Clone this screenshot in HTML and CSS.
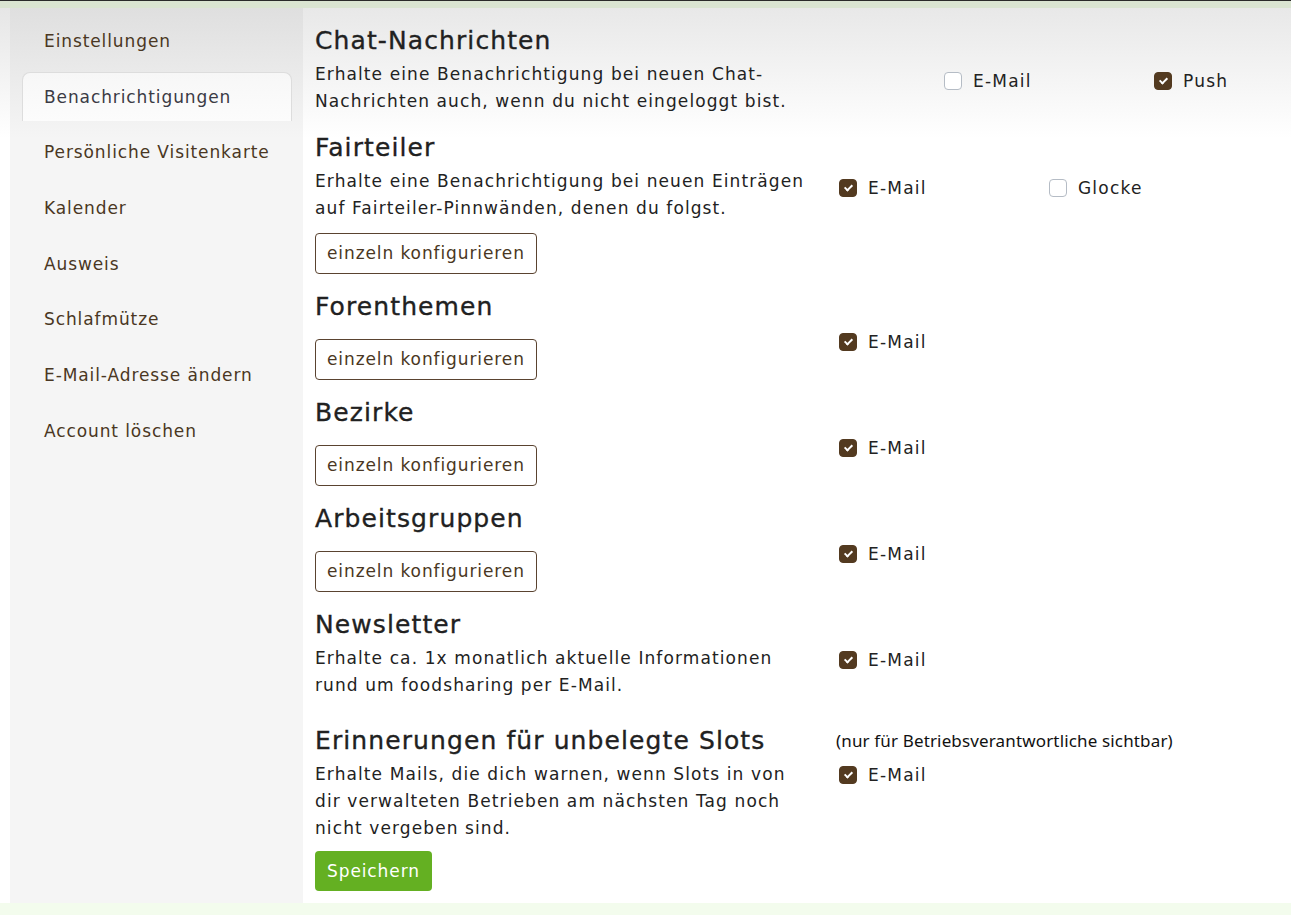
FILE: index.html
```html
<!DOCTYPE html>
<html>
<head>
    <title>Benachrichtigungen</title>
    <link rel="stylesheet" href="styles.css">
</head>
<body>
    <div class="topbar"></div>
    <div class="page">
        <div class="sidebar">
            <a class="nav-item">Einstellungen</a>
            <a class="nav-item active">Benachrichtigungen</a>
            <a class="nav-item">Persönliche Visitenkarte</a>
            <a class="nav-item">Kalender</a>
            <a class="nav-item">Ausweis</a>
            <a class="nav-item">Schlafmütze</a>
            <a class="nav-item">E-Mail-Adresse ändern</a>
            <a class="nav-item">Account löschen</a>
        </div>

        <div class="content">
            <div class="section">
                <div class="info">
                    <h2>Chat-Nachrichten</h2>
                    <p>Erhalte eine Benachrichtigung bei neuen Chat-Nachrichten auch, wenn du nicht eingeloggt bist.</p>
                </div>
                <div class="options options-low shifted">
                    <label class="option"><span class="box"></span>E-Mail</label>
                    <label class="option"><span class="box checked"></span>Push</label>
                </div>
            </div>

            <div class="section">
                <div class="info">
                    <h2>Fairteiler</h2>
                    <p>Erhalte eine Benachrichtigung bei neuen Einträgen auf Fairteiler-Pinnwänden, denen du folgst.</p>
                    <button class="btn-outline">einzeln konfigurieren</button>
                </div>
                <div class="options options-low">
                    <label class="option"><span class="box checked"></span>E-Mail</label>
                    <label class="option"><span class="box"></span>Glocke</label>
                </div>
            </div>

            <div class="section">
                <div class="info">
                    <h2>Forenthemen</h2>
                    <button class="btn-outline no-text">einzeln konfigurieren</button>
                </div>
                <div class="options">
                    <label class="option"><span class="box checked"></span>E-Mail</label>
                </div>
            </div>

            <div class="section">
                <div class="info">
                    <h2>Bezirke</h2>
                    <button class="btn-outline no-text">einzeln konfigurieren</button>
                </div>
                <div class="options">
                    <label class="option"><span class="box checked"></span>E-Mail</label>
                </div>
            </div>

            <div class="section">
                <div class="info">
                    <h2>Arbeitsgruppen</h2>
                    <button class="btn-outline no-text">einzeln konfigurieren</button>
                </div>
                <div class="options">
                    <label class="option"><span class="box checked"></span>E-Mail</label>
                </div>
            </div>

            <div class="section newsletter">
                <div class="info">
                    <h2>Newsletter</h2>
                    <p>Erhalte ca. 1x monatlich aktuelle Informationen rund um foodsharing per E-Mail.</p>
                </div>
                <div class="options">
                    <label class="option"><span class="box checked"></span>E-Mail</label>
                </div>
            </div>

            <div class="section last">
                <div class="info">
                    <h2>Erinnerungen für unbelegte Slots</h2>
                    <p>Erhalte Mails, die dich warnen, wenn Slots in von dir verwalteten Betrieben am nächsten Tag noch nicht vergeben sind.</p>
                    <button class="btn-save">Speichern</button>
                </div>
                <div class="options-col">
                    <div class="note">(nur für Betriebsverantwortliche sichtbar)</div>
                    <div class="options options-note">
                        <label class="option"><span class="box checked"></span>E-Mail</label>
                    </div>
                </div>
            </div>
        </div>
    </div>
</body>
</html>
```

FILE: styles.css
```css
body {
    margin: 0;
    background-color: #f3fced;
    font-family: "DejaVu Sans", "Noto Sans", sans-serif;
    color: #222;
}

.topbar {
    height: 7px;
    border-top: 1px solid #2a2a2a;
    background-color: #dae4d1;
}

.page {
    display: flex;
    padding-left: 10px;
    background: linear-gradient(#e6e6e6, #ffffff 130px);
}

/* Seitenleiste */
.sidebar {
    flex: 0 0 293px;
    box-sizing: border-box;
    padding: 8px 11px 0 12px;
    background: linear-gradient(#dfdfdf, #f5f5f5 130px);
    display: flex;
    flex-direction: column;
    gap: 6.7px;
}

.nav-item {
    display: block;
    height: 49px;
    line-height: 49px;
    padding: 0 21px;
    box-sizing: border-box;
    font-size: 17px;
    letter-spacing: 0.9px;
    white-space: nowrap;
    color: #4a3723;
    border: 1px solid transparent;
    border-bottom: none;
    border-radius: 8px 8px 0 0;
}

.nav-item.active {
    background: linear-gradient(#f7f7f7, #fcfcfc);
    border-color: #dddddd;
    color: #3b3b45;
}

/* Inhalt */
.content {
    flex: 1;
    min-width: 0;
    padding: 18px 12px 12px 12px;
    background: linear-gradient(#e8e8e8, #ffffff 130px);
}

.section {
    display: grid;
    grid-template-columns: 490px minmax(0, 1fr);
    column-gap: 31px;
    margin-bottom: 18px;
}

.section.newsletter {
    margin-bottom: 27px;
}

.section.last {
    margin-bottom: 0;
}

.info h2 {
    margin: 0 0 5px 0;
    font-size: 25px;
    font-weight: normal;
    letter-spacing: 1.1px;
    line-height: 30px;
    color: #212121;
    -webkit-text-stroke: 0.35px #212121;
}

.info p {
    margin: 0;
    font-size: 17px;
    letter-spacing: 1.1px;
    line-height: 27px;
}

.btn-outline {
    display: block;
    margin-top: 10.5px;
    height: 41px;
    padding: 0 11px;
    font-family: inherit;
    font-size: 17px;
    letter-spacing: 0.9px;
    color: #4a3723;
    background: #fff;
    border: 1px solid #5a4330;
    border-radius: 4px;
}

.btn-outline.no-text {
    margin-top: 17px;
}

.btn-save {
    display: block;
    margin-top: 9.5px;
    height: 40px;
    padding: 0 12px;
    font-family: inherit;
    font-size: 17px;
    letter-spacing: 0.9px;
    color: #fff;
    background: #64b022;
    border: none;
    border-radius: 4px;
}

.options {
    display: flex;
    padding-top: 40px;
}

.options-low {
    padding-top: 45px;
}

.shifted {
    margin-left: 105px;
}

.options-note {
    padding-top: 12px;
}

.option {
    flex: 0 0 210px;
    box-sizing: border-box;
    height: 20px;
    display: flex;
    align-items: center;
    gap: 11px;
    padding-left: 3px;
    font-size: 17px;
    letter-spacing: 1.2px;
    color: #222;
}

.option:last-child {
    flex: 0 0 auto;
}

.box {
    width: 18px;
    height: 18px;
    box-sizing: border-box;
    border: 1px solid #b5bcc5;
    border-radius: 4px;
    background: #fff;
    position: relative;
}

.box.checked {
    border-color: #533a20;
    background: #533a20;
}

/* Haken im Kästchen */
.box.checked::after {
    content: "";
    position: absolute;
    left: 5.5px;
    top: 3px;
    width: 3px;
    height: 6px;
    border: solid #fff;
    border-width: 0 2px 2px 0;
    transform: rotate(45deg);
}

.note {
    margin-top: 3px;
    font-family: "Noto Sans", "Open Sans", sans-serif;
    font-size: 17px;
    letter-spacing: 0.15px;
    line-height: 24px;
    color: #111;
}
```
